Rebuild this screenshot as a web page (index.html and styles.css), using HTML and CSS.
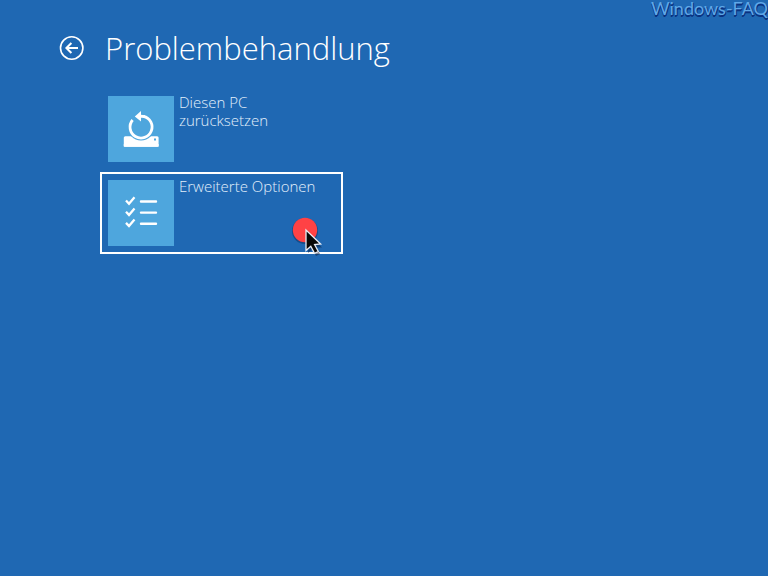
FILE: index.html
```html
<!DOCTYPE html>
<html lang="de">
<head>
<meta charset="utf-8">
<meta name="viewport" content="width=device-width, initial-scale=1">
<title>Problembehandlung</title>
<link rel="stylesheet" href="styles.css">
</head>
<body>

<div class="watermark">Windows-FAQ</div>

<header class="header">
  <button class="back" type="button" aria-label="Zurück">
    <svg viewBox="0 0 26 26" width="26" height="26" fill="none" stroke="#fff">
      <circle cx="12.7" cy="13" r="11.2" stroke-width="1.6"/>
      <path d="M19 13H8M12.4 8L7.4 13l5 5" stroke-width="2"/>
    </svg>
  </button>
  <h1>Problembehandlung</h1>
</header>

<main class="options">
  <button class="option" type="button">
    <span class="tile">
      <svg viewBox="0 0 66 66" width="66" height="66">
        <rect x="15.8" y="40.3" width="34.8" height="10.4" rx="1.5" fill="#fff"/>
        <path d="M15.8 48h34.8v2.7H15.8z" fill="#fff"/>
        <circle cx="33" cy="31" r="13.6" fill="#4ea6dd"/>
        <path d="M35.5 20.3A11 11 0 1 1 24.6 24" fill="none" stroke="#fff" stroke-width="2.8"/>
        <path d="M26.8 20.4L33 15v3.8l4 .5v2.8l-4-.4v3.9z" fill="#fff"/>
        <rect x="46" y="42.5" width="2" height="2" fill="#4ea6dd"/>
      </svg>
    </span>
    <span class="label">Diesen PC<br>zurücksetzen</span>
  </button>

  <button class="option selected" type="button">
    <span class="tile">
      <svg viewBox="0 0 66 66" width="66" height="66" fill="none" stroke="#fff">
        <path d="M18 20.5l3 3.2 5.5-6.5M18 31.7l3 3.2 5.5-6.5M18 42.9l3 3.2 5.5-6.5" stroke-width="2.3"/>
        <path d="M33 21.5h15M33 32.6h15M33 43.7h15" stroke-width="2.4" stroke-linecap="round"/>
      </svg>
    </span>
    <span class="label">Erweiterte Optionen</span>
    <svg class="pointer" viewBox="0 0 34 42" width="34" height="42" aria-hidden="true">
      <circle cx="15" cy="15" r="13" fill="#12386b" opacity=".6"/>
      <circle cx="15" cy="14" r="12.2" fill="#ff4245"/>
      <path d="M18 17v20l4.5-4 3.5 7 4-2-3.5-6.500h5.500z" fill="#0b1c3c" opacity=".5"/>
      <path d="M16 14v20.500l4.800-4.300 3.700 7.200 3.800-1.900-3.700-7 6-.5z" fill="#080808" stroke="#e8ecf5" stroke-width="1.3"/>
    </svg>
  </button>
</main>

</body>
</html>
```
FILE: styles.css
```css
* {
  box-sizing: border-box;
}

body {
  position: relative;
  min-height: 100vh;
  margin: 0;
  background-color: #1f68b3;
  color: #fff;
  font-family: 'Open Sans', 'Noto Sans', sans-serif;
  font-weight: 300;
}

button {
  padding: 0;
  border: none;
  background: none;
  color: inherit;
  font: inherit;
  cursor: pointer;
}

/* Site mark over the top right corner */
.watermark {
  position: absolute;
  top: 0;
  right: 0;
  color: #60a8e8;
  font-family: Lato, sans-serif;
  font-size: 18px;
  font-weight: 400;
  line-height: 16px;
  text-shadow: 1px 1px 0 #0a3280, 0 2px 0 #0a3280;
}

.header {
  display: flex;
  align-items: center;
  gap: 20px;
  padding: 24px 59px 0;
}

.back {
  display: flex;
}

h1 {
  margin: 0;
  font-size: 31px;
  font-weight: 300;
  line-height: 48px;
}

.options {
  display: flex;
  flex-direction: column;
  gap: 2px;
  padding: 16px 100px;
}

.option {
  position: relative;
  display: flex;
  gap: 5px;
  width: 100%;
  max-width: 243px;
  padding: 6px;
  border: 2px solid transparent;
  text-align: left;
}

.option.selected {
  border-color: #fff;
}

.tile {
  flex: none;
  display: flex;
  background-color: #4ea6dd;
}

/* Pulled up so the capitals line up with the top of the tile */
.label {
  margin-top: -3px;
  color: #e2effb;
  font-size: 15px;
  line-height: 18px;
}

/* Mouse pointer with its click marker */
.pointer {
  position: absolute;
  right: 17px;
  bottom: -6px;
}
```
